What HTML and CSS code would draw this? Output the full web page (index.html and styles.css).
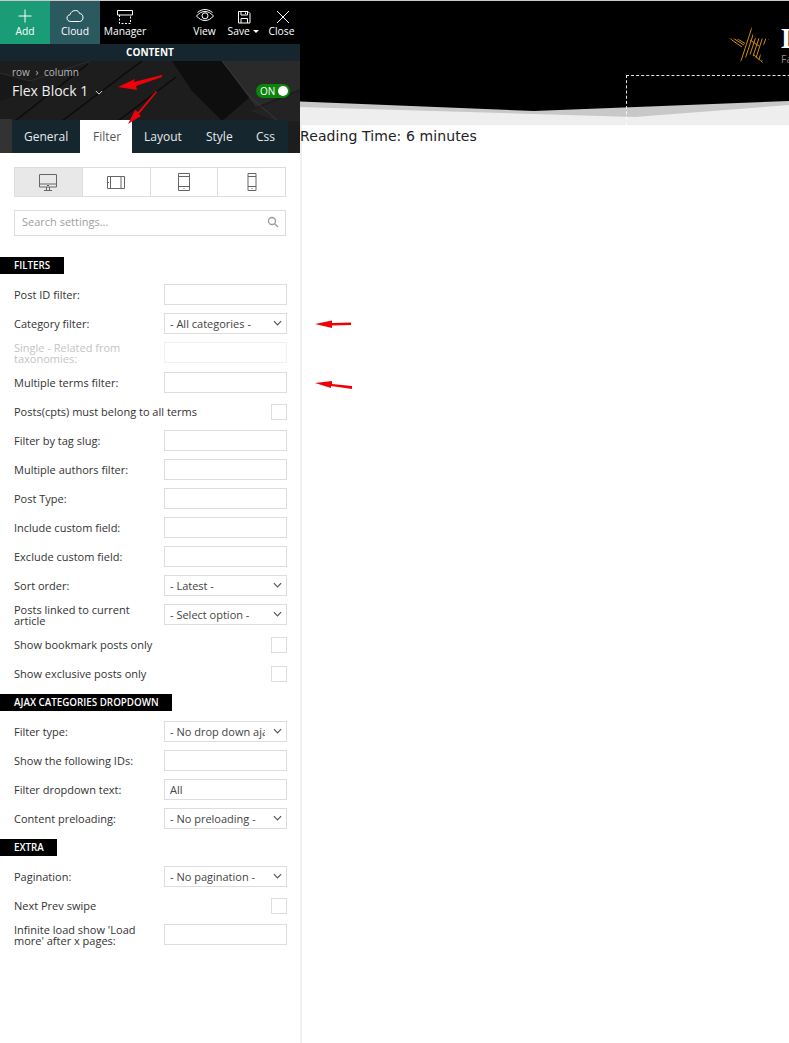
FILE: index.html
```html
<!DOCTYPE html>
<html lang="en">
<head>
<meta charset="utf-8">
<title>Flex Block 1</title>
<link rel="stylesheet" href="styles.css">
</head>
<body>
<div class="page">
  <aside class="panel">
    <nav class="topbar">
      <a class="tool tool-add">
        <svg class="icon" viewBox="0 0 18 18"><path d="M9 3.500v13M2.500 10h13"/></svg>
        <span>Add</span>
      </a>
      <a class="tool tool-cloud">
        <svg class="icon" viewBox="0 0 18 18"><path d="M5 15.500C2.500 15.500 1 14 1 12C1 10 2.500 8.800 4 8.800C4.500 6 7 4.500 9.500 4.500C11.500 4.500 13 5.500 13.500 7.500C15.500 7.500 17 9 17 11.500C17 14 15.500 15.500 13.500 15.500z"/></svg>
        <span>Cloud</span>
      </a>
      <a class="tool tool-manager">
        <svg class="icon" viewBox="0 0 18 18"><path d="M1.500 4.500h15v4.500h-15z"/><path class="dashed" d="M3.500 9v8.500h11V9"/></svg>
        <span>Manager</span>
      </a>
      <span class="spacer"></span>
      <a class="tool tool-small">
        <svg class="icon" viewBox="0 0 18 18"><path d="M1.500 6.500C4 4.500 6.500 3.500 9 3.500S14 4.500 16.500 6.500"/><path d="M.5 10C3 7 6 5.500 9 5.500S15 7 17.500 10C15 13 12 14.500 9 14.500S3 13 .5 10z"/><circle cx="9" cy="9.800" r="3"/></svg>
        <span>View</span>
      </a>
      <a class="tool tool-small">
        <svg class="icon" viewBox="0 0 18 18"><path d="M3.500 5.500h9.500l2 2v9.500H3.500zM6 5.500V9h6.500V5.500M10.500 6.500V8M6 17v-4.500h6.500V17"/></svg>
        <span>Save <i class="caret"></i></span>
      </a>
      <a class="tool tool-small">
        <svg class="icon" viewBox="0 0 18 18"><path d="M4 5l12 12M16 5L4 17"/></svg>
        <span>Close</span>
      </a>
    </nav>
    <div class="content-bar">CONTENT</div>
    <header class="block-head">
      <svg class="head-art" viewBox="0 0 300 92" preserveAspectRatio="none">
        <rect width="300" height="92" fill="#1d1d1d"/>
        <path d="M172 0H222L250 36L222 60L192 30z" fill="#0e0e0e"/>
        <path d="M222 0H300V28L256 46z" fill="#2a2a2a"/>
        <path d="M250 50L300 30V60H276z" fill="#232323"/>
        <path d="M0 12L32 21L16 34L0 40z" fill="#181818"/>
        <path d="M0 58H12V92H0z" fill="#333333"/>
        <path d="M15 60L88 3M62 60L142 0M118 60L176 16" fill="none" stroke="#0b0b0b" stroke-width="1.500"/>
        <path d="M0 12L30 20L90 0" fill="none" stroke="#2e2e2e"/>
        <path d="M222 0L250 36L278 60" fill="none" stroke="#3a3a3a"/>
      </svg>
      <div class="crumbs">row <span class="sep">&rsaquo;</span> column</div>
      <div class="title-row">
        <h1 class="block-title">Flex Block 1</h1>
        <svg class="title-chevron" viewBox="0 0 10 6"><path d="M1 1l4 4 4-4"/></svg>
        <span class="toggle"><b>ON</b><i class="knob"></i></span>
      </div>
      <div class="tabs">
        <a class="tab">General</a>
        <a class="tab active">Filter</a>
        <a class="tab">Layout</a>
        <a class="tab">Style</a>
        <a class="tab">Css</a>
      </div>
    </header>

    <div class="settings">
      <div class="devices">
        <a class="device active"><svg viewBox="0 0 20 20"><path d="M1.500 2.500h17V15h-17zM1.500 12h17M8.500 15v3M11.500 15v3M6 18.500h8M9 13.500h2"/></svg></a>
        <a class="device"><svg viewBox="0 0 20 20"><path d="M1.500 4.500h17v12h-17zM4.500 4.500v12M15 4.500v12M2.500 10v1"/></svg></a>
        <a class="device"><svg viewBox="0 0 20 20"><path d="M4.500 1.500h11v17h-11zM4.500 4.500h11M4.500 14.500h11M9.500 16.500h1"/></svg></a>
        <a class="device"><svg viewBox="0 0 20 20"><path d="M6 1.500h8v17H6zM6 4.500h8M6 14.500h8M9.500 16.500h1"/></svg></a>
      </div>
      <div class="search">
        <input class="search-input" placeholder="Search settings...">
        <svg class="search-icon" viewBox="0 0 12 12"><circle cx="5" cy="5" r="3.500"/><path d="M7.500 7.500l3.500 3.500"/></svg>
      </div>

      <h2 class="section first">FILTERS</h2>
      <div class="row"><label>Post ID filter:</label><input class="field"></div>
      <div class="row"><label>Category filter:</label><div class="select"><select><option>- All categories -</option></select><svg viewBox="0 0 10 6"><path d="M1 1l4 4 4-4"/></svg></div></div>
      <div class="row row-disabled"><label>Single - Related from taxonomies:</label><input class="field" disabled></div>
      <div class="row"><label>Multiple terms filter:</label><input class="field"></div>
      <div class="row"><label>Posts(cpts) must belong to all terms</label><input class="check" type="checkbox"></div>
      <div class="row"><label>Filter by tag slug:</label><input class="field"></div>
      <div class="row"><label>Multiple authors filter:</label><input class="field"></div>
      <div class="row"><label>Post Type:</label><input class="field"></div>
      <div class="row"><label>Include custom field:</label><input class="field"></div>
      <div class="row"><label>Exclude custom field:</label><input class="field"></div>
      <div class="row"><label>Sort order:</label><div class="select"><select><option>- Latest -</option></select><svg viewBox="0 0 10 6"><path d="M1 1l4 4 4-4"/></svg></div></div>
      <div class="row row-wide"><label>Posts linked to current article</label><div class="select"><select><option>- Select option -</option></select><svg viewBox="0 0 10 6"><path d="M1 1l4 4 4-4"/></svg></div></div>
      <div class="row"><label>Show bookmark posts only</label><input class="check" type="checkbox"></div>
      <div class="row"><label>Show exclusive posts only</label><input class="check" type="checkbox"></div>

      <h2 class="section ajax">AJAX CATEGORIES DROPDOWN</h2>
      <div class="row"><label>Filter type:</label><div class="select"><select><option>- No drop down ajax -</option></select><svg viewBox="0 0 10 6"><path d="M1 1l4 4 4-4"/></svg></div></div>
      <div class="row"><label>Show the following IDs:</label><input class="field"></div>
      <div class="row"><label>Filter dropdown text:</label><input class="field" value="All"></div>
      <div class="row"><label>Content preloading:</label><div class="select"><select><option>- No preloading -</option></select><svg viewBox="0 0 10 6"><path d="M1 1l4 4 4-4"/></svg></div></div>

      <h2 class="section extra">EXTRA</h2>
      <div class="row"><label>Pagination:</label><div class="select"><select><option>- No pagination -</option></select><svg viewBox="0 0 10 6"><path d="M1 1l4 4 4-4"/></svg></div></div>
      <div class="row"><label>Next Prev swipe</label><input class="check" type="checkbox"></div>
      <div class="row"><label>Infinite load show 'Load more' after x pages:</label><input class="field"></div>
    </div>
  </aside>

  <main class="site">
    <header class="site-head">
      <svg class="site-wedge" viewBox="0 0 489 124" preserveAspectRatio="none">
        <rect width="489" height="124" fill="#eeeeee"/>
        <path d="M0 0H489V104L335 116L0 106z" fill="#c8c8c8"/>
        <path d="M0 0H489V100L234 110L0 100.500z" fill="#000"/>
      </svg>
      <div class="logo">
        <svg class="logo-star" viewBox="0 0 40 40">
          <defs><clipPath id="star"><path d="M21.500 0L25 14L40 15L30 26L34 39L21 30L8 40L13 26L0 14L15 16z"/></clipPath></defs>
          <g clip-path="url(#star)">
            <path d="M24 0L11 40M27.500 0L14.500 40M31 0L18 40M34.500 0L21.500 40M38 0L25 40M41.500 0L28.500 40M45 0L32 40"/>
            <path d="M0 14L13 23M4 14L15 21M8 14.500L16 19.500M24 30L34 39M21 16L30 22"/>
          </g>
        </svg>
        <div class="logo-text"><span class="logo-name">D</span><span class="logo-tag">Fashion</span></div>
      </div>
      <div class="dash-box"></div>
    </header>
    <p class="reading">Reading Time: 6 minutes</p>
  </main>
</div>

<svg class="annotations" viewBox="0 0 789 1043" aria-hidden="true">
  <path d="M162 75L134 82L135 79L118 87L137 90L136 86L162 77z"/>
  <path d="M156 91L138 112L135 110L128 124L141 116L139 114L157 92z"/>
  <path d="M351 322.500L332 323V320.500L315 324L332 328V325.500L351 325z"/>
  <path d="M352 386L332 384V381L315 383L331 388V386L352 389z"/>
</svg>
</body>
</html>
```

FILE: styles.css
```css
* { box-sizing: border-box; }
html, body { margin: 0; padding: 0; background: #fff; }
body { font-family: "Open Sans", sans-serif; color: #333; border-top: 1px solid #c9c9c9; position: relative; }
.page { display: flex; align-items: stretch; min-height: 1042px; }

.panel { width: 300px; flex: none; }

.topbar { display: flex; height: 43px; background: #000; }
.tool { width: 50px; display: flex; flex-direction: column; align-items: center; padding-top: 5px; color: #fff; font-size: 10.300px; line-height: 14px; }
.tool span { white-space: nowrap; }
.tool-add { background: #1a9c77; }
.tool-cloud { background: #2a5a60; }
.tool-small { width: 39px; }
.tool-small:last-child { width: 37px; }
.spacer { flex: 1; }
.icon { width: 18px; height: 18px; fill: none; stroke: #fff; stroke-width: 1; display: block; margin-bottom: 0; }
.icon .dashed { stroke-dasharray: 2 1.500; }
.caret { display: inline-block; width: 0; height: 0; border: 3px solid transparent; border-top-color: #fff; border-bottom: 0; vertical-align: 2px; margin-left: 1px; }

.content-bar { height: 17px; background: #15262f; color: #fff; font-size: 10px; font-weight: 700; line-height: 17px; text-align: center; }

.block-head { position: relative; height: 92px; padding: 5px 12px 0; overflow: hidden; display: flex; flex-direction: column; }
.head-art { position: absolute; inset: 0; width: 100%; height: 100%; }
.crumbs, .title-row, .tabs { position: relative; }
.crumbs { font-size: 10px; line-height: 13px; color: #b5b5b5; }
.sep { padding: 0 3px; }
.title-row { display: flex; align-items: center; height: 22px; margin-top: 1px; }
.block-title { margin: 0; font-size: 14px; font-weight: 400; color: #f0f0f0; line-height: 22px; }
.title-chevron { width: 8px; height: 5px; margin: 3px 0 0 7px; fill: none; stroke: #ddd; stroke-width: 1.200; }
.toggle { margin-left: auto; margin-right: -2px; width: 34px; height: 14px; border-radius: 7px; background: #0a840a; display: flex; align-items: center; justify-content: space-between; padding: 0 2px 0 4px; }
.toggle b { font-size: 10px; font-weight: 400; color: #fff; }
.knob { width: 10px; height: 10px; border-radius: 50%; background: #fff; }
.tabs { display: flex; margin-top: auto; height: 33px; background: #15262f; }
.tab { padding: 0 12px; line-height: 33px; font-size: 12px; color: #e6eaec; }
.tab:nth-child(1) { width: 68px; }
.tab:nth-child(2) { width: 52px; padding-left: 13px; }
.tab:nth-child(3) { width: 64px; }
.tab:nth-child(4) { width: 50px; padding-left: 10px; }
.tab:nth-child(5) { padding-left: 10px; }
.tab.active { background: #fff; color: #555; }

.settings { padding-top: 14px; }
.devices { display: flex; margin: 0 14px; height: 30px; border: 1px solid #ddd; }
.device { flex: 1; display: flex; align-items: center; justify-content: center; border-left: 1px solid #ddd; }
.device:first-child { border-left: 0; }
.device.active { background: #e8e8e8; }
.device svg { width: 20px; height: 20px; fill: none; stroke: #666; stroke-width: 1; }
.search { position: relative; margin: 12px 14px 0; height: 26px; }
.search-input { width: 100%; height: 100%; border: 1px solid #ddd; padding: 0 26px 2px 7px; font: 11px "Open Sans", sans-serif; outline: 0; }
.search-input::placeholder { color: #a0a0a0; opacity: 1; }
.search-icon { position: absolute; right: 7px; top: 7px; width: 12px; height: 12px; fill: none; stroke: #9a9a9a; stroke-width: 1.300; }

.section { margin: 10px 0; height: 17px; line-height: 17px; font-size: 9.800px; font-weight: 600; color: #fff; background: #000; padding-left: 14px; }
.section.first { margin-top: 22px; width: 64px; }
.section.ajax { margin-top: 10px; width: 172px; }
.section.extra { width: 57px; }

.row { display: flex; align-items: center; justify-content: space-between; height: 21px; margin-bottom: 8px; padding: 0 13px 0 14px; }
.row label { flex: 1; min-width: 0; font-size: 11px; line-height: 11px; color: #333; }
.row:has(.field, .select) label { max-width: 135px; }
.row-disabled, .row-wide { margin-bottom: 9px; }
.row-disabled label { color: #c4c4c4; }
.field, .select select { width: 123px; height: 21px; border: 1px solid #ddd; background: #fff; font: 11px "Open Sans", sans-serif; color: #444; padding: 0 5px; outline: 0; border-radius: 0; flex: none; display: block; }
.field:disabled { border-color: #f0f0f0; background: #fff; }
.select { position: relative; flex: none; width: 123px; }
.select select { appearance: none; padding-right: 21px; }
.select svg { position: absolute; right: 5px; top: 7px; width: 9px; height: 6px; fill: none; stroke: #555; stroke-width: 1.300; pointer-events: none; }
.check { appearance: none; width: 16px; height: 16px; margin: 0; border: 1px solid #ddd; background: #fff; flex: none; }

.site { flex: 1; min-width: 0; overflow: hidden; box-shadow: inset 2px 0 #f0f0f0; }
.site-head { position: relative; height: 124px; overflow: hidden; }
.site-wedge { position: absolute; inset: 0; width: 100%; height: 100%; }
.logo { position: absolute; left: 429px; top: 23px; display: flex; gap: 12px; white-space: nowrap; }
.logo-star { width: 40px; height: 40px; fill: none; stroke: #d18f0b; stroke-width: 1; }
.logo-text { display: flex; flex-direction: column; }
.logo-name { font: 700 29px/29px "Liberation Serif", serif; color: #fff; }
.logo-tag { font: 10.500px/13px "Open Sans", sans-serif; color: #8a8a8a; }
.dash-box { position: absolute; left: 326px; top: 74px; width: 200px; height: 60px; border: 1px dashed #fff; opacity: .9; }
.reading { margin: 1px 0 0; font: 14px/20px "DejaVu Sans", Verdana, sans-serif; letter-spacing: .09px; color: #222; white-space: nowrap; }

.annotations { position: absolute; left: 0; top: -1px; width: 789px; height: 1043px; pointer-events: none; }
.annotations path { fill: #f0000a; }
```
